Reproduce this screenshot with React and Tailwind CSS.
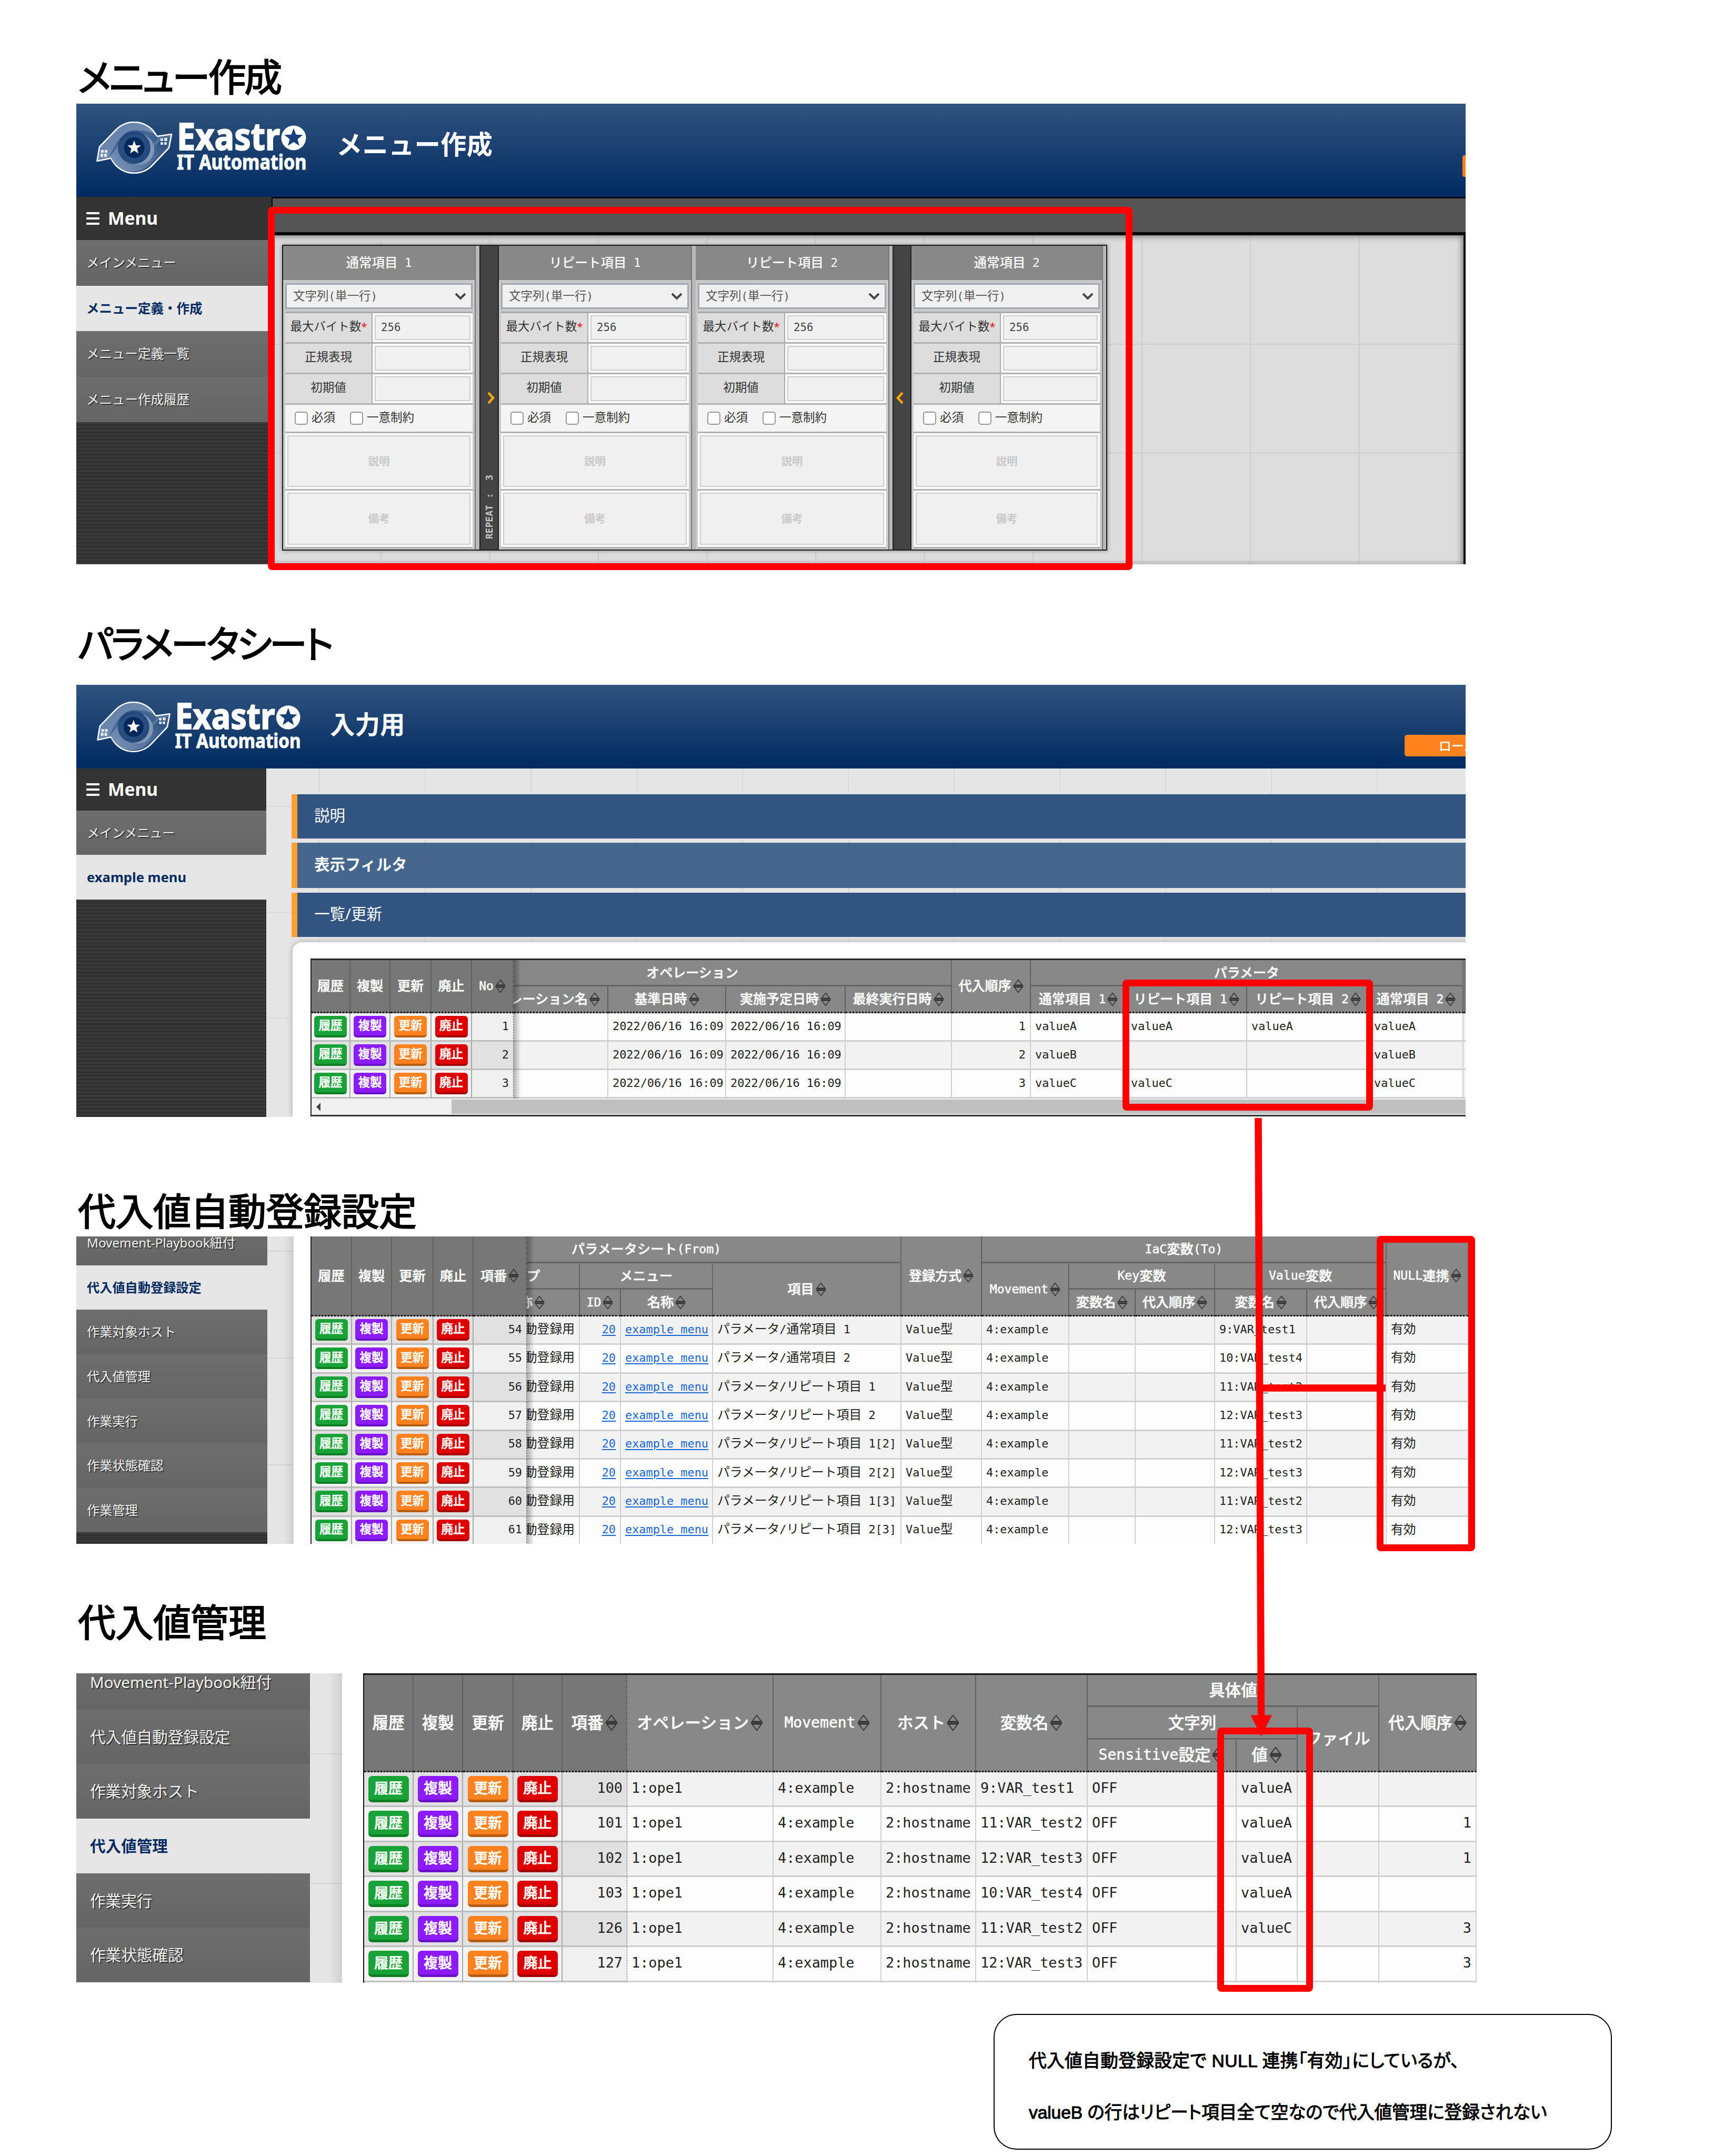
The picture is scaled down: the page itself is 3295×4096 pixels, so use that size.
import React from "react";

/* Monospaced latin runs inside Japanese text */
function T({ children }) {
  return String(children)
    .split(/([\x20-\x7e]+)/)
    .filter(Boolean)
    .map((part, i) =>
      /^[\x20-\x7e]/.test(part) ? (
        <span key={i} className="whitespace-pre text-[0.92em] [font-family:'DejaVu_Sans_Mono',monospace]">
          {part}
        </span>
      ) : (
        <span key={i}>{part}</span>
      )
    );
}

function Star({ cx, cy, r, fill }) {
  const pts = [];
  for (let i = 0; i < 10; i++) {
    const rad = i % 2 ? r * 0.42 : r;
    const a = (Math.PI / 5) * i - Math.PI / 2;
    pts.push(`${(cx + rad * Math.cos(a)).toFixed(2)},${(cy + rad * Math.sin(a)).toFixed(2)}`);
  }
  return <polygon points={pts.join(" ")} fill={fill} />;
}

function Logo({ className = "" }) {
  return (
    <div className={"flex w-[401px] origin-top-left items-start " + className}>
      <svg width="146" height="99" viewBox="-1 -1 146 99" className="mt-[3px] shrink-0">
        <defs>
          <linearGradient id="lgA" x1="0" y1="0" x2="1" y2="1">
            <stop offset="0" stopColor="#5d7ba3" />
            <stop offset="0.45" stopColor="#6f8bb0" />
            <stop offset="1" stopColor="#0f3468" />
          </linearGradient>
          <linearGradient id="lgB" x1="0" y1="1" x2="1" y2="0">
            <stop offset="0" stopColor="#8ba1c0" />
            <stop offset="0.6" stopColor="#4c6c99" />
            <stop offset="1" stopColor="#123a70" />
          </linearGradient>
        </defs>
        <path
          d="M1.500 74 L6 47 L39 13 A48 48 0 0 1 115 27 L143 23 L138 49 L104 84.500 A48 48 0 0 1 28 68.500 Z"
          fill="url(#lgA)"
          stroke="#fff"
          strokeWidth="2.600"
          strokeLinejoin="round"
        />
        <path d="M24 68 L50 34 A31 31 0 0 1 103 46 L118 31 L115 27 A46 46 0 0 0 84 16 C60 12 42 24 24 68 Z" fill="#2a4f83" opacity="0.6" />
        <path d="M28 68 C34 54 40 44 46 38 A30 30 0 0 0 84 76 L124 32 L138 30 L134 47 L100 82 A46 46 0 0 1 28 68 Z" fill="url(#lgB)" opacity="0.75" />
        <circle cx="72" cy="48.500" r="31" fill="#1d4478" opacity="0.85" />
        <path d="M72 79.500 A31 31 0 0 0 103 48.500 A31 31 0 0 0 90 24 A28 28 0 0 1 72 79.500 Z" fill="#8197b8" />
        <circle cx="72" cy="48.500" r="19.500" fill="#04285c" />
        <Star cx={72} cy={48.5} r={13.5} fill="#fff" />
        <g fill="#fff" opacity="0.85">
          <path d="M9 53h5v5h-5zM16 53h5v5h-5zM8 60h5v6h-5zM15 60h5v6h-5z" />
          <path d="M122 31h5v5h-5zM129 30h6v6h-6zM122 38h5v5h-5zM129 38h5v5h-5z" />
        </g>
      </svg>
      <div className="ml-[8px] flex flex-col font-bold text-white">
        <div className="flex h-[60px] items-start">
          <div className="w-[198px]">
            <div className="origin-left scale-x-[0.885] text-[71px] leading-[60px] whitespace-nowrap [-webkit-text-stroke:2px_white]">Exastr</div>
          </div>
          <svg width="48" height="48" viewBox="0 0 48 48" className="mt-[10px]">
            <circle cx="24" cy="24" r="23.500" fill="#fff" />
            <Star cx={24} cy={24} r={18.5} fill="#17407a" />
          </svg>
        </div>
        <div className="-mt-px origin-left scale-x-[0.866] text-[39.5px] leading-[40px] whitespace-nowrap [-webkit-text-stroke:1px_white]">IT Automation</div>
      </div>
    </div>
  );
}

function Burger() {
  return (
    <div className="flex w-[25px] flex-col gap-[6px]">
      <div className="h-[4px] bg-white" />
      <div className="h-[4px] bg-white" />
      <div className="h-[4px] bg-white" />
    </div>
  );
}

function MenuHead({ className }) {
  return (
    <div className={"flex shrink-0 items-center gap-[16px] bg-[#333] pl-[19px] text-[33.5px] leading-none font-bold text-white " + className}>
      <Burger />
      <span>Menu</span>
    </div>
  );
}

function MenuItem({ children, active, className }) {
  return (
    <div
      className={
        "flex shrink-0 items-center leading-none whitespace-nowrap " +
        (active
          ? "bg-[#e6e6e6] font-bold text-[#002b62] "
          : "bg-linear-to-b from-[#6e6e6e] to-[#656565] text-[#f0f0f0] [text-shadow:2px_2px_1px_#333] ") +
        className
      }
    >
      {children}
    </div>
  );
}

const STRIPES =
  "flex-1 bg-[repeating-linear-gradient(to_bottom,#393939_0px,#393939_4px,#2f2f2f_4px,#2f2f2f_7px)]";

function Sort({ big }) {
  return (
    <svg viewBox="0 0 20 27" className={big ? "ml-[3px] h-[32px] w-[24px] shrink-0" : "ml-[3px] h-[27px] w-[20px] shrink-0"}>
      <path d="M10 1.500 L18.500 12.600 H1.500 Z" fill="none" stroke="#333" strokeWidth="1.500" />
      <path d="M10 25.500 L18.500 14.400 H1.500 Z" fill="none" stroke="#333" strokeWidth="1.500" />
      <path d="M3.500 10.500 H16.500 L18 12.500 H2 Z M3.500 16.500 H16.500 L18 14.500 H2 Z" fill="#333" />
    </svg>
  );
}

/* ---------- Section 1: menu builder ---------- */

const DIV = "border-b-[3px] border-[#b0b0b0]";

function FieldRow({ label, value, required }) {
  return (
    <div className={"flex h-[58px] " + DIV}>
      <div className="flex w-[166px] shrink-0 items-center justify-center border-r-2 border-[#aaa] bg-[#ddd] pb-[4px] text-[22.5px] text-[#333]">
        {label}
        {required && <span className="w-[10px] text-[20px] text-red-600">*</span>}
      </div>
      <div className="flex-1 bg-[#fafafa] px-[4px] py-[4px]">
        <div className="flex h-full items-center border-2 border-[#ccc] bg-[#f0f0f0] pl-[10px] text-[22.5px] text-[#444]">
          <T>{value || ""}</T>
        </div>
      </div>
    </div>
  );
}

function Check({ label }) {
  return (
    <div className="flex items-center gap-[7px]">
      <div className="size-[25px] rounded-[5px] border-2 border-[#999] bg-white" />
      <span className="pb-[2px] text-[22.5px] text-[#333]">{label}</span>
    </div>
  );
}

function ItemColumn({ title, className }) {
  return (
    <div className={"flex flex-col bg-[#c9c9c9] leading-none " + className}>
      <div className="flex h-[65px] shrink-0 items-center justify-center bg-[#888] text-[24.5px] font-medium text-white">
        <T>{title}</T>
      </div>
      <div className="mx-[4px] mt-[6px] flex h-[49px] shrink-0 items-center justify-between border-[3px] border-[#a3a9ae] bg-[#f0f0f0] pr-[9px] pl-[12px] text-[22.5px] text-[#555]">
        <span>
          <T>文字列(単一行)</T>
        </span>
        <svg width="22" height="14" viewBox="0 0 22 14">
          <path d="M2 2 L11 11 L20 2" fill="none" stroke="#444" strokeWidth="4" />
        </svg>
      </div>
      <div className="mx-[4px] mt-[5px] flex flex-col border-t-[3px] border-[#aaa]">
        <FieldRow label="最大バイト数" value="256" required />
        <FieldRow label="正規表現" />
        <FieldRow label="初期値" />
        <div className={"flex h-[54px] items-center gap-[28px] bg-[#f4f4f4] pl-[18px] " + DIV}>
          <Check label="必須" />
          <Check label="一意制約" />
        </div>
        <div className={"h-[109px] bg-[#fafafa] p-[4px] " + DIV}>
          <div className="flex h-full items-center justify-center border-2 border-[#ccc] bg-[#f0f0f0] text-[20.5px] font-bold text-[#c8c8c8]">説明</div>
        </div>
        <div className={"h-[110px] bg-[#fafafa] p-[4px] " + DIV}>
          <div className="flex h-full items-center justify-center border-2 border-[#ccc] bg-[#f0f0f0] text-[20.5px] font-bold text-[#c8c8c8]">備考</div>
        </div>
      </div>
    </div>
  );
}

function Gap({ className = "w-[9px]" }) {
  return <div className={"shrink-0 border-l-2 border-[#777] bg-[#b9b9b9] " + className} />;
}

function Strip({ left, className }) {
  return (
    <div className={"flex shrink-0 flex-col items-center border-x-2 border-[#1f1f1f] bg-[#444] pt-[277px] " + className}>
      <svg width="16" height="24" viewBox="0 0 16 24" className={left ? "mr-[8px]" : "ml-[6px]"}>
        <path d={left ? "M13 2 L4 12 L13 22" : "M3 2 L12 12 L3 22"} fill="none" stroke="#ffa500" strokeWidth="4.500" />
      </svg>
      {!left && (
        <div className="mt-[134px] rotate-180 text-[18px] leading-none font-bold whitespace-pre text-[#c4c4c4] [font-family:'DejaVu_Sans_Mono',monospace] [word-spacing:1px] [writing-mode:vertical-rl]">
          {"REPEAT :  3"}
        </div>
      )}
    </div>
  );
}

function MenuBuilder() {
  return (
    <div className="flex h-[875px] w-[2640px] flex-col overflow-hidden">
      <div className="flex h-[177px] shrink-0 items-start bg-linear-to-b from-[#31547f] to-[#002a61]">
        <div className="w-[494px] pt-[31px] pl-[37px]">
          <Logo />
        </div>
        <div className="flex h-[155px] items-center text-[49.5px] leading-none font-bold text-white">メニュー作成</div>
        <div className="mt-[98px] ml-auto h-[41px] w-[6px] rounded-l-[4px] bg-[#ff801a]" />
      </div>
      <div className="flex flex-1">
        <div className="flex w-[371px] shrink-0 flex-col">
          <MenuHead className="h-[82px]" />
          <MenuItem className="h-[87px] pl-[19px] text-[24.5px]">メインメニュー</MenuItem>
          <MenuItem active className="h-[86px] pl-[19px] text-[24.5px]">メニュー定義・作成</MenuItem>
          <MenuItem className="h-[87px] pl-[19px] text-[24.5px]">メニュー定義一覧</MenuItem>
          <MenuItem className="h-[86px] pl-[19px] text-[24.5px]">メニュー作成履歴</MenuItem>
          <div className={STRIPES} />
        </div>
        <div className="flex flex-1 flex-col border-l-2 border-black">
          <div className="h-[73px] shrink-0 border-t-[3px] border-b-[6px] border-[#080808] bg-[#555]" />
          <div className="flex-1 border-r-[4px] border-[#0a0a0a] bg-[#ddd] bg-[linear-gradient(to_right,#cdcdcd_2px,transparent_2px),linear-gradient(to_bottom,#cdcdcd_2px,transparent_2px)] bg-[length:206.5px_206.5px] shadow-[inset_-3px_2px_12px_#777] [background-position:205px_206px]">
            <div className="mt-[18px] ml-[18px] flex h-[581px] w-[1568px] border-2 border-[#1c1c1c] bg-[#bbb] shadow-[0_0_8px_#888]">
              <ItemColumn title="通常項目 1" className="w-[364px]" />
              <Gap />
              <Strip className="w-[37px]" />
              <ItemColumn title="リピート項目 1" className="w-[365px]" />
              <Gap />
              <ItemColumn title="リピート項目 2" className="w-[366px]" />
              <Gap className="w-[8px]" />
              <Strip left className="w-[36px]" />
              <ItemColumn title="通常項目 2" className="w-[362px]" />
              <Gap className="flex-1" />
            </div>
          </div>
        </div>
      </div>
    </div>
  );
}

/* ---------- Data tables ---------- */

const BTN_COLORS = {
  履歴: "bg-[#19a238] border-[#0c7f22]",
  複製: "bg-[#8c1bff] border-[#6a10c8]",
  更新: "bg-[#ff821e] border-[#b85c10]",
  廃止: "bg-[#de0000] border-[#a60000]",
};

function ActionCell({ label, odd, big }) {
  return (
    <div
      className={
        "flex justify-center border-r-2 border-b-[3px] border-r-[#a8a8a8] border-b-[#bdbdbd] " +
        (odd ? "bg-[#e1e1e1] " : "bg-[#f3f3f3] ") +
        (big ? "pt-[7px]" : "pt-[5px]")
      }
    >
      <div
        className={
          "flex items-center justify-center font-medium text-white " +
          (big
            ? "h-[50px] w-[77px] rounded-[7px] border-b-[5px] text-[27px] [-webkit-text-stroke:0.7px_white] "
            : "h-[41px] w-[62px] rounded-[6px] border-b-[4px] text-[22.5px] [-webkit-text-stroke:0.6px_white] ") +
          BTN_COLORS[label]
        }
      >
        {label}
      </div>
    </div>
  );
}

function Th({ children, sort, big, frozen, last, className = "" }) {
  return (
    <div
      className={
        "flex items-center justify-center overflow-hidden border-r-2 whitespace-nowrap text-white font-medium [-webkit-text-stroke:0.5px_white] " +
        (frozen ? "bg-[#777] " : "bg-[#888] ") +
        (last ? "border-b-[3px] [border-bottom-style:dotted] border-r-[#606060] border-b-[#111] " : "border-b-[3px] border-[#666] ") +
        className
      }
    >
      <T>{children}</T>
      {sort && <Sort big={big} />}
    </div>
  );
}

function Td({ children, right, odd, frozen, link, className = "" }) {
  return (
    <div
      className={
        "flex items-center overflow-hidden border-b-[3px] whitespace-nowrap " +
        (right ? "justify-end " : "") +
        (frozen
          ? "border-r px-[8px] border-b-[#bdbdbd] border-r-[#666] [border-right-style:dashed] " + (odd ? "bg-[#e1e1e1] " : "bg-[#f0f0f0] ")
          : "border-r-2 px-[8px] border-[#d0d0d0] " + (odd ? "bg-[#f2f2f2] " : "bg-[#fdfdfd] ")) +
        (link ? "text-[#1a66d2] " : "text-[#222] ") +
        className
      }
    >
      {children ? (
        <span className={link ? "underline decoration-2 underline-offset-[3px]" : ""}>
          <T>{children}</T>
        </span>
      ) : null}
    </div>
  );
}

const ACTIONS = ["履歴", "複製", "更新", "廃止"];

const COLS2 =
  "grid grid-cols-[74px_76px_78px_77px_79px_180px_224px_227px_202px_150px_182px_229px_233px_178px_4px]";

const ROWS2 = [
  ["1", "valueA", "valueA", "valueA", "valueA"],
  ["2", "valueB", "", "", "valueB"],
  ["3", "valueC", "valueC", "", "valueC"],
];

const SHADE = "pointer-events-none absolute top-0 bottom-0 w-[14px] bg-linear-to-r from-black/30 to-transparent";

function ParamTable() {
  return (
    <div className="relative w-[2200px] border-t-[3px] border-l-2 border-[#222]">
      <div className={COLS2 + " grid-rows-[50px_51px] text-[25px]"}>
        {ACTIONS.map((a) => (
          <Th key={a} frozen last className="row-span-2">{a}</Th>
        ))}
        <Th frozen last sort className="row-span-2 [border-right-style:dashed]">No</Th>
        <Th className="col-span-4 pr-[152px]">オペレーション</Th>
        <Th last sort className="row-span-2">代入順序</Th>
        <Th className="col-span-4">パラメータ</Th>
        <Th last className="row-span-2"> </Th>
        <Th last sort className="col-start-6 justify-end! pr-[14px]">レーション名</Th>
        <Th last sort>基準日時</Th>
        <Th last sort>実施予定日時</Th>
        <Th last sort>最終実行日時</Th>
        <Th last sort className="col-start-11">通常項目 1</Th>
        <Th last sort>リピート項目 1</Th>
        <Th last sort>リピート項目 2</Th>
        <Th last sort>通常項目 2</Th>
      </div>
      <div className={COLS2 + " auto-rows-[54px] text-[23.8px] leading-none"}>
        {ROWS2.map((r, i) => {
          const odd = i % 2 === 1;
          const c = { odd, className: "pb-[4px]" };
          return (
            <React.Fragment key={i}>
              {ACTIONS.map((a) => (
                <ActionCell key={a} label={a} odd={odd} />
              ))}
              <Td {...c} right frozen>{r[0]}</Td>
              <Td {...c} />
              <Td {...c}>2022/06/16 16:09</Td>
              <Td {...c}>2022/06/16 16:09</Td>
              <Td {...c} />
              <Td {...c} right>{r[0]}</Td>
              <Td {...c}>{r[1]}</Td>
              <Td {...c}>{r[2]}</Td>
              <Td {...c}>{r[3]}</Td>
              <Td {...c}>{r[4]}</Td>
              <div className="border-b-[3px] border-[#d0d0d0] bg-[#f2f2f2]" />
            </React.Fragment>
          );
        })}
      </div>
      <div className={SHADE + " left-[384px] bottom-[34px]!"} />
      <div className="flex h-[34px] items-center border-b-[3px] border-[#333] bg-[#f0f0f0]">
        <svg width="9" height="16" viewBox="0 0 9 16" className="ml-[9px]">
          <path d="M8 0 V16 L0 8 Z" fill="#444" />
        </svg>
        <div className="ml-[248px] h-[27px] flex-1 bg-[#bfbfbf]" />
      </div>
    </div>
  );
}

function Bar({ children, className }) {
  return (
    <div className={"flex items-center border-l-[11px] border-[#ff9f2f] pb-[5px] pl-[32px] text-[29.5px] leading-none text-white " + className}>
      {children}
    </div>
  );
}

function ParamSheet() {
  return (
    <div className="flex h-[821px] w-[2640px] flex-col overflow-hidden">
      <div className="flex h-[159px] shrink-0 items-start overflow-hidden bg-linear-to-b from-[#31547f] to-[#002a61]">
        <div className="w-[482px] shrink-0 pt-[29px] pl-[38px]">
          <Logo className="scale-[0.97]" />
        </div>
        <div className="flex h-[150px] items-center text-[47.5px] leading-none font-bold text-white">入力用</div>
        <div className="mt-[95px] ml-auto flex h-[41px] w-[116px] shrink-0 items-center overflow-hidden rounded-l-[5px] bg-[#ff821e] pl-[65px] text-[24px] leading-none font-medium whitespace-nowrap text-white">
          ロール
        </div>
      </div>
      <div className="flex flex-1">
        <div className="flex w-[361px] shrink-0 flex-col">
          <MenuHead className="h-[80px] gap-[15px]" />
          <MenuItem className="h-[84px] pl-[20px] text-[24px]">メインメニュー</MenuItem>
          <MenuItem active className="h-[85px] pl-[20px] text-[25.6px]">example menu</MenuItem>
          <div className={STRIPES} />
        </div>
        <div className="flex w-[2279px] flex-col overflow-hidden bg-[#e5e5e5] bg-[linear-gradient(to_right,#dadada_2px,transparent_2px),linear-gradient(to_bottom,#dadada_2px,transparent_2px)] bg-[length:201px_201px] pt-[49px] pl-[48px] [background-position:100px_71px]">
          <Bar className="h-[84px] shrink-0 bg-[#325480]">説明</Bar>
          <Bar className="mt-[8px] h-[86px] shrink-0 bg-[#47668d] font-bold">表示フィルタ</Bar>
          <Bar className="mt-[9px] h-[84px] shrink-0 bg-[#325480]">一覧/更新</Bar>
          <div className="mt-[10px] ml-[2px] w-[2300px] flex-1 rounded-tl-[18px] bg-white pt-[31px] pl-[34px] shadow-[0_0_12px_#aaa]">
            <ParamTable />
          </div>
        </div>
      </div>
    </div>
  );
}

/* ---------- Section 3 ---------- */

const COLS3 =
  "grid grid-cols-[77px_76px_79px_76px_101px_101px_78px_175px_358px_153px_166px_126px_151px_175px_151px_156px]";

const ROWS3 = [
  ["54", "パラメータ/通常項目 1", "9:VAR_test1", ""],
  ["55", "パラメータ/通常項目 2", "10:VAR_test4", ""],
  ["56", "パラメータ/リピート項目 1", "11:VAR_test2", "1"],
  ["57", "パラメータ/リピート項目 2", "12:VAR_test3", "1"],
  ["58", "パラメータ/リピート項目 1[2]", "11:VAR_test2", "2"],
  ["59", "パラメータ/リピート項目 2[2]", "12:VAR_test3", "2"],
  ["60", "パラメータ/リピート項目 1[3]", "11:VAR_test2", "3"],
  ["61", "パラメータ/リピート項目 2[3]", "12:VAR_test3", "3"],
];

function AutoRegister() {
  const item = "h-[84.6px] pl-[20px] text-[24.2px]";
  return (
    <div className="flex h-[584px] w-[2646px] overflow-hidden">
      <div className="flex w-[363px] shrink-0 flex-col">
        <MenuItem className={"-mt-[30px] " + item}>Movement-Playbook紐付</MenuItem>
        <MenuItem active className={item}>代入値自動登録設定</MenuItem>
        <MenuItem className={item}>作業対象ホスト</MenuItem>
        <MenuItem className={item}>代入値管理</MenuItem>
        <MenuItem className={item}>作業実行</MenuItem>
        <MenuItem className={item}>作業状態確認</MenuItem>
        <MenuItem className={item}>作業管理</MenuItem>
        <div className={STRIPES} />
      </div>
      <div className="w-[50px] shrink-0 bg-[#e5e5e5] bg-[linear-gradient(to_right,transparent_60%,#00000018),linear-gradient(to_bottom,#d6d6d6_2px,transparent_2px)] bg-[length:100%_100%,100%_203px] [background-position:0_0,0_27px]" />
      <div className="relative ml-[32px] shrink-0 border-l-2 border-[#222]">
        <div className={COLS3 + " grid-rows-[51px_50px_51px] text-[25.2px]"}>
          {ACTIONS.map((a) => (
            <Th key={a} frozen last className="row-span-3">{a}</Th>
          ))}
          <Th frozen last sort className="row-span-3 [border-right-style:dashed]">項番</Th>
          <Th className="col-span-4 pr-[256px]">パラメータシート(From)</Th>
          <Th last sort className="row-span-3">登録方式</Th>
          <Th className="col-span-5">IaC変数(To)</Th>
          <Th last sort className="row-span-3">NULL連携</Th>
          <Th className="col-start-6 row-start-2 justify-start!">プ</Th>
          <Th className="col-span-2">メニュー</Th>
          <Th last sort className="row-span-2">項目</Th>
          <Th last sort className="col-start-11 row-span-2">Movement</Th>
          <Th className="col-span-2">Key変数</Th>
          <Th className="col-span-2">Value変数</Th>
          <Th last sort className="col-start-6 row-start-3 justify-end! pr-[65px]">称</Th>
          <Th last sort>ID</Th>
          <Th last sort>名称</Th>
          <Th last sort className="col-start-12">変数名</Th>
          <Th last sort>代入順序</Th>
          <Th last sort>変数名</Th>
          <Th last sort>代入順序</Th>
        </div>
        <div className={COLS3 + " auto-rows-[54.4px] text-[23.8px] leading-none"}>
          {ROWS3.map((r, i) => {
            const odd = i % 2 === 0;
            const c = { odd, className: "pb-[4px]" };
            return (
              <React.Fragment key={i}>
                {ACTIONS.map((a) => (
                  <ActionCell key={a} label={a} odd={odd} />
                ))}
                <Td {...c} right frozen>{r[0]}</Td>
                <Td {...c} right>動登録用</Td>
                <Td {...c} right link>20</Td>
                <Td {...c} link>example menu</Td>
                <Td {...c}>{r[1]}</Td>
                <Td {...c}>Value型</Td>
                <Td {...c}>4:example</Td>
                <Td {...c} />
                <Td {...c} />
                <Td {...c}>{r[2]}</Td>
                <Td odd={odd} right className="pr-[4px]! pb-[4px]">{r[3]}</Td>
                <Td {...c}>有効</Td>
              </React.Fragment>
            );
          })}
        </div>
        <div className={SHADE + " left-[409px]"} />
      </div>
    </div>
  );
}

/* ---------- Section 4 ---------- */

const COLS4 =
  "grid grid-cols-[94px_94px_96px_93px_123px_278px_205px_180px_212px_283px_116px_155px_185px]";

const ROWS4 = [
  ["100", "9:VAR_test1", "valueA", ""],
  ["101", "11:VAR_test2", "valueA", "1"],
  ["102", "12:VAR_test3", "valueA", "1"],
  ["103", "10:VAR_test4", "valueA", ""],
  ["126", "11:VAR_test2", "valueC", "3"],
  ["127", "12:VAR_test3", "", "3"],
];

function ValueManagement() {
  const item = "h-[103.7px] pl-[26px] text-[29.6px]";
  return (
    <div className="flex h-[588px] w-[2661px] overflow-hidden">
      <div className="flex w-[444px] shrink-0 flex-col">
        <MenuItem className={"-mt-[35px] " + item}>Movement-Playbook紐付</MenuItem>
        <MenuItem className={item}>代入値自動登録設定</MenuItem>
        <MenuItem className={item}>作業対象ホスト</MenuItem>
        <MenuItem active className={item}>代入値管理</MenuItem>
        <MenuItem className={item}>作業実行</MenuItem>
        <MenuItem className={item}>作業状態確認</MenuItem>
      </div>
      <div className="w-[61px] shrink-0 bg-[#e5e5e5] bg-[linear-gradient(to_right,transparent_60%,#00000018),linear-gradient(to_bottom,#d6d6d6_2px,transparent_2px)] bg-[length:100%_100%,100%_246px] [background-position:0_0,0_152px]" />
      <div className="ml-[40px] shrink-0 border-t-[3px] border-l-2 border-[#111]">
        <div className={COLS4 + " grid-rows-[61px_62px_61.5px] text-[30.5px]"}>
          {ACTIONS.map((a) => (
            <Th key={a} frozen last className="row-span-3">{a}</Th>
          ))}
          <Th frozen last sort big className="row-span-3 [border-right-style:dashed]">項番</Th>
          <Th last sort big className="row-span-3">オペレーション</Th>
          <Th last sort big className="row-span-3">Movement</Th>
          <Th last sort big className="row-span-3">ホスト</Th>
          <Th last sort big className="row-span-3">変数名</Th>
          <Th className="col-span-3">具体値</Th>
          <Th last sort big className="row-span-3">代入順序</Th>
          <Th className="col-span-2 col-start-10 row-start-2">文字列</Th>
          <Th last className="row-span-2">ファイル</Th>
          <Th last sort big className="col-start-10 row-start-3">Sensitive設定</Th>
          <Th last sort big>値</Th>
        </div>
        <div className={COLS4 + " auto-rows-[66.5px] text-[29.2px] leading-none"}>
          {ROWS4.map((r, i) => {
            const odd = i % 2 === 0;
            const c = { odd, className: "pb-[5px]" };
            return (
              <React.Fragment key={i}>
                {ACTIONS.map((a) => (
                  <ActionCell key={a} label={a} odd={odd} big />
                ))}
                <Td {...c} right frozen>{r[0]}</Td>
                <Td {...c}>1:ope1</Td>
                <Td {...c}>4:example</Td>
                <Td {...c}>2:hostname</Td>
                <Td {...c}>{r[1]}</Td>
                <Td {...c}>OFF</Td>
                <Td {...c}>{r[2]}</Td>
                <Td {...c} />
                <Td {...c} right>{r[3]}</Td>
              </React.Fragment>
            );
          })}
        </div>
      </div>
    </div>
  );
}

function Title({ children, className }) {
  return (
    <h2
      className={
        "flex shrink-0 items-end pl-[3px] text-[72px] leading-none whitespace-nowrap text-black [-webkit-text-stroke:2px_black] [font-feature-settings:'palt'] " +
        className
      }
    >
      {children}
    </h2>
  );
}

const RED = "pointer-events-none absolute rounded-[8px] border-[13.5px] border-[#f00] ";

export default function App() {
  return (
    <div
      lang="ja"
      className="relative flex h-[4096px] w-[3295px] flex-col overflow-hidden bg-white pl-[145px] [font-family:'Noto_Sans','Noto_Sans_CJK_JP',sans-serif]"
    >
      <Title className="h-[197px] pb-[16px] tracking-[-3.4px]">メニュー作成</Title>
      <MenuBuilder />
      <Title className="h-[229px] pb-[43px] tracking-[-4.500px]">パラメータシート</Title>
      <ParamSheet />
      <Title className="h-[227px] pb-[13px] tracking-[-0.500px]">代入値自動登録設定</Title>
      <AutoRegister />
      <Title className="h-[246px] pb-[62px] tracking-[-0.500px]">代入値管理</Title>
      <ValueManagement />
      <div className="mt-[59px] ml-[1743px] flex h-[258px] w-[1175px] flex-col justify-center gap-[64px] rounded-[44px] border-2 border-black pt-[18px] pl-[65px] text-[33.7px] leading-[34px] whitespace-nowrap text-black [-webkit-text-stroke:1px_black] [font-family:'Liberation_Sans','Noto_Sans_CJK_JP',sans-serif] [font-feature-settings:'palt']">
        <p className="tracking-[0.35px]">代入値自動登録設定で NULL 連携「有効」にしているが、</p>
        <p className="tracking-[-0.15px]">valueB の行はリピート項目全て空なので代入値管理に登録されない</p>
      </div>

      {/* Annotations drawn over the screens */}
      <div className={RED + "top-[393px] left-[509px] h-[690px] w-[1643px]"} />
      <div className={RED + "top-[1861px] left-[2133px] h-[249px] w-[476px]"} />
      <div className={RED + "top-[2348px] left-[2616px] h-[599px] w-[187px]"} />
      <div className={RED + "top-[3282px] left-[2313px] h-[502px] w-[182px]"} />
      <svg className="pointer-events-none absolute top-0 left-0" width="3295" height="4096" viewBox="0 0 3295 4096">
        <path d="M2391 2124 L2396.500 3262" stroke="#f00" strokeWidth="13.500" />
        <path d="M2393 2637 H2633" stroke="#f00" strokeWidth="13.500" />
        <path d="M2376.500 3258.500 H2417 L2396.500 3299 Z" fill="#f00" />
      </svg>
    </div>
  );
}
